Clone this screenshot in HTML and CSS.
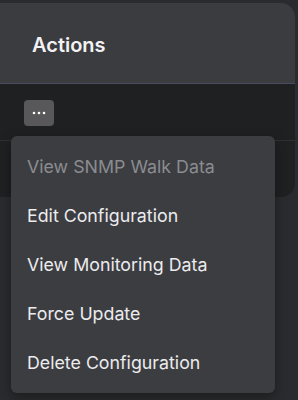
FILE: index.html
```html
<!DOCTYPE html>
<html lang="en">
<head>
    <meta charset="UTF-8">
    <meta name="viewport" content="width=device-width, initial-scale=1.0">
    <title>Actions</title>
    <link rel="stylesheet" href="styles.css">
</head>
<body>

    <div class="card">
        <div class="card-head">
            <h2>Actions</h2>
        </div>
        <div class="row">
            <button class="more" aria-label="More actions">
                <svg width="14" height="4" viewBox="0 0 14 4"><circle cx="2" cy="2" r="1.3" fill="#fff"/><circle cx="7" cy="2" r="1.3" fill="#fff"/><circle cx="12" cy="2" r="1.3" fill="#fff"/></svg>
            </button>
        </div>
        <div class="row"></div>
    </div>

    <ul class="menu">
        <li class="disabled">View SNMP Walk Data</li>
        <li>Edit Configuration</li>
        <li>View Monitoring Data</li>
        <li>Force Update</li>
        <li>Delete Configuration</li>
    </ul>

</body>
</html>
```

FILE: styles.css
```css
body { margin: 0; padding-top: 3px; background: #2a2b2e; font-family: Inter, "Noto Sans", sans-serif; height: 400px; overflow: hidden; position: relative; }

.card { margin: 0 3px 0 -20px; background: #1f2022; border-radius: 14px; overflow: hidden; }
.card-head { height: 80px; background: #3b3c40; border-bottom: 1px solid #4a4b62; display: flex; align-items: center; padding-left: 52px; }
.card-head h2 { margin: 0; padding-top: 3px; color: #f2f2f4; font-size: 20px; font-weight: 600; }

.row { height: 56px; border-bottom: 1px solid #2f3033; display: flex; align-items: center; padding-left: 44px; }
.row:last-child { border-bottom: none; }

.more { width: 30px; height: 26px; border: none; border-radius: 4px; background: #58585a; display: flex; align-items: center; justify-content: center; padding: 0; margin-top: 2px; }

.menu { position: absolute; left: 11px; top: 136px; width: 264px; margin: 0; padding: 6px 0; list-style: none; background: #3c3d41; border-radius: 6px; box-shadow: 0 4px 12px rgba(0,0,0,0.35); box-sizing: border-box; height: 257px; }
.menu li { height: 49px; display: flex; align-items: center; padding-left: 16px; font-size: 17.8px; color: #ececee; }
.menu li.disabled { color: #8b8c90; }
```
